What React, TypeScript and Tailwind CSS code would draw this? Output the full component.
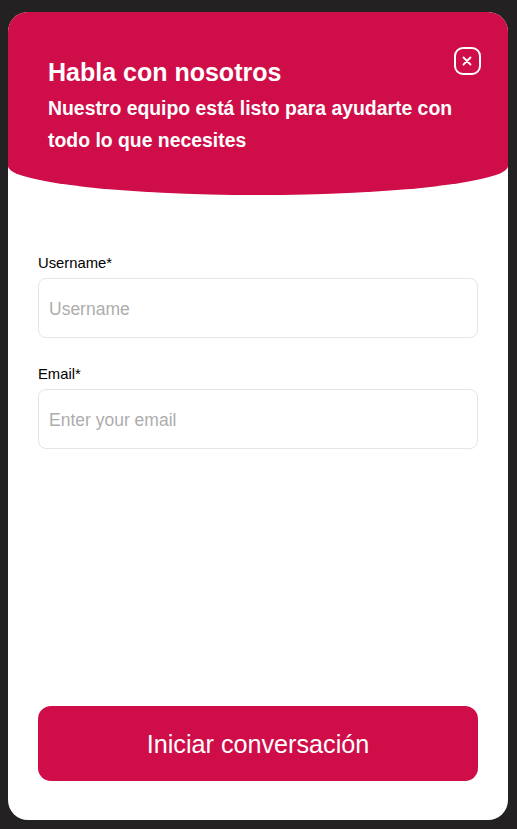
const Field = ({ label, placeholder, type = "text" }: { label: string; placeholder: string; type?: string }) => {
  return (
    <div className="flex flex-col">
      <label className="pt-[1px] text-[14.8px] leading-[20px] text-black mb-[5px]">{label}</label>
      <input
        type={type}
        placeholder={placeholder}
        className="h-[60px] w-full rounded-[8px] border border-[#e5e5e5] bg-white px-[10px] pt-[2px] text-[17.5px] outline-none placeholder:text-[#adadad]"
      />
    </div>
  );
};

export default function App() {
  return (
    <div className="h-[829px] w-[517px] bg-[#232122] pt-[12px] pb-[9px] pl-[8px] pr-[9px] font-['Liberation_Sans',Arial,sans-serif]">
      <div className="flex h-full flex-col rounded-[20px] bg-white">
        <div className="flex h-[183px] items-start justify-between rounded-t-[20px] rounded-bl-[50%_29px] rounded-br-[50%_29px] bg-[#cf0e49] pt-[45px] pl-[40px] pr-[27px] text-white">
          <div className="w-[420px]">
            <h1 className="text-[25px] font-bold leading-[30px]">Habla con nosotros</h1>
            <p className="mt-[5px] text-[19.4px] font-bold leading-[32px]">
              Nuestro equipo está listo para ayudarte con todo lo que necesites
            </p>
          </div>
          <button className="-mt-[10px] flex h-[28px] w-[28px] items-center justify-center rounded-[9px] border-2 border-white">
            <svg width="10" height="10" viewBox="0 0 10 10" fill="none" stroke="white" strokeWidth="1.8" strokeLinecap="round">
              <path d="M1.5 1.5l7 7M8.5 1.5l-7 7" />
            </svg>
          </button>
        </div>

        <form className="flex flex-1 flex-col px-[30px] pt-[57px] pb-[39px]">
          <div className="flex flex-col gap-[25px]">
            <Field label="Username*" placeholder="Username" />
            <Field label="Email*" placeholder="Enter your email" type="email" />
          </div>
          <button
            type="button"
            className="mt-auto h-[75px] w-full rounded-[13px] bg-[#cf0e49] pt-[2px] text-[25.2px] text-white"
          >
            Iniciar conversación
          </button>
        </form>
      </div>
    </div>
  );
}
